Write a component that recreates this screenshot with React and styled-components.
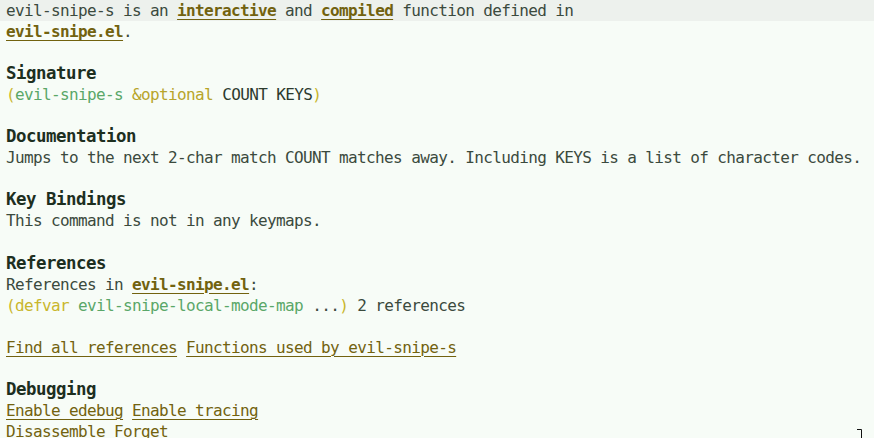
import styled, { createGlobalStyle } from 'styled-components';

const GlobalStyle = createGlobalStyle`
    html, body {
        margin: 0;
        padding: 0;
        background-color: #f7fcf7;
    }
`;

const Buffer = styled.div`
    position: relative;
    width: 874px;
    height: 438px;
    overflow: hidden;
    background-color: #f7fcf7;
    font-family: "DejaVu Sans Mono", "Liberation Mono", monospace;
    font-size: 16px;
    letter-spacing: -0.63px;
    color: #3b4a3d;
`;

const Line = styled.div`
    height: 21.05px;
    line-height: 21.05px;
    padding-left: 6px;
    white-space: pre;
    background-color: ${({ $current }) => ($current ? '#edf1ed' : 'transparent')};
`;

const Heading = styled(Line)`
    font-size: 17.4px;
    letter-spacing: -0.48px;
    font-weight: bold;
    color: #1d2f1f;
`;

const Button = styled.span`
    color: #72620f;
    font-weight: ${({ $bold }) => ($bold ? 'bold' : 'normal')};
    text-decoration: underline;
    text-decoration-thickness: 1px;
    text-underline-offset: 3px;
`;

const Paren = styled.span`
    color: #c9b62c;
`;

const Name = styled.span`
    color: #5aa768;
`;

const Keyword = styled.span`
    color: #b7a52a;
`;

const Arg = styled.span`
    color: #2c3a2e;
`;

const FringeMark = styled.svg`
    position: absolute;
    right: 12px;
    bottom: 0;
`;

export default function App(){
    return <>
        <GlobalStyle/>
        <Buffer>
            <Line $current>evil-snipe-s is an <Button $bold>interactive</Button> and <Button $bold>compiled</Button> function defined in</Line>
            <Line><Button $bold>evil-snipe.el</Button>.</Line>
            <Line/>
            <Heading>Signature</Heading>
            <Line><Paren>(</Paren><Name>evil-snipe-s</Name> <Keyword>&amp;optional</Keyword> <Arg>COUNT KEYS</Arg><Paren>)</Paren></Line>
            <Line/>
            <Heading>Documentation</Heading>
            <Line>Jumps to the next 2-char match COUNT matches away. Including KEYS is a list of character codes.</Line>
            <Line/>
            <Heading>Key Bindings</Heading>
            <Line>This command is not in any keymaps.</Line>
            <Line/>
            <Heading>References</Heading>
            <Line>References in <Button $bold>evil-snipe.el</Button>:</Line>
            <Line><Paren>(defvar</Paren> <Name>evil-snipe-local-mode-map</Name> ...<Paren>)</Paren> 2 references</Line>
            <Line/>
            <Line><Button>Find all references</Button> <Button>Functions used by evil-snipe-s</Button></Line>
            <Line/>
            <Heading>Debugging</Heading>
            <Line><Button>Enable edebug</Button> <Button>Enable tracing</Button></Line>
            <Line><Button>Disassemble</Button> <Button>Forget</Button></Line>
            <FringeMark width="5" height="9" viewBox="0 0 5 9">
                <path d="M0 0.5 H4.5 V9" fill="none" stroke="#111" strokeWidth="1"/>
            </FringeMark>
        </Buffer>
    </>;
};
